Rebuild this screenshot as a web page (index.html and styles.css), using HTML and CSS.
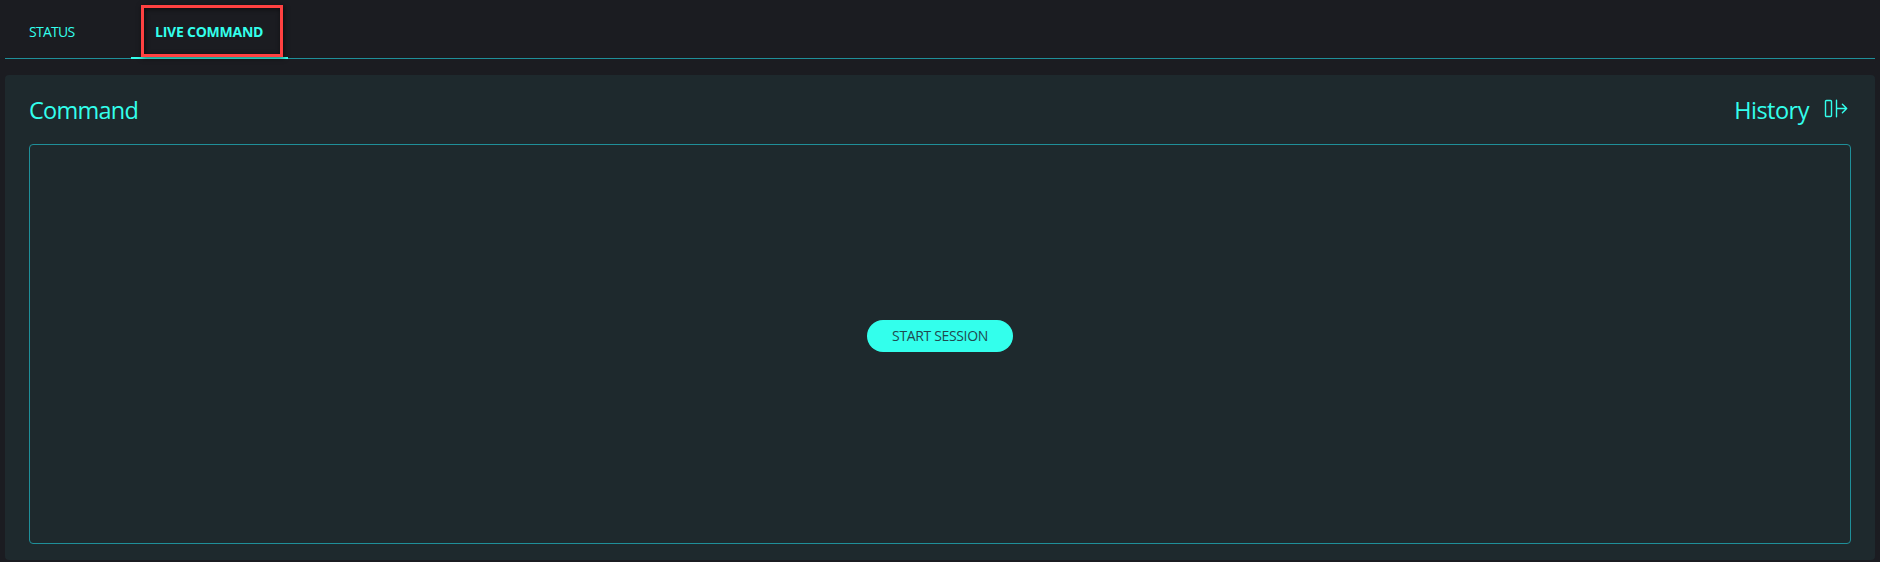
FILE: index.html
```
<!DOCTYPE html>
<html lang="en">
<head>
<meta charset="utf-8">
<title>Live Command</title>
<link rel="stylesheet" href="styles.css">
</head>
<body>
<nav class="tabs">
  <a class="tab tab-status"><span>STATUS</span></a>
  <a class="tab tab-active"><span>LIVE COMMAND</span><i class="highlight"></i></a>
</nav>
<main class="panel">
  <header class="panel-header">
    <h2 class="title title-command">Command</h2>
    <div class="history">
      <h2 class="title title-history">History</h2>
      <svg class="history-icon" width="24" height="20" viewBox="0 0 24 20" fill="none" stroke="currentColor" stroke-width="1.4" stroke-linecap="round" stroke-linejoin="round">
        <rect x="1.5" y="1.5" width="6" height="16" rx="1"/>
        <path d="M12.5 1.2V17.8M12.5 9.5H22.7M18.4 5.2L22.7 9.5L18.4 13.8"/>
      </svg>
    </div>
  </header>
  <section class="terminal">
    <button class="start">START SESSION</button>
  </section>
</main>
</body>
</html>
```
FILE: styles.css
```
* { box-sizing: border-box; }
body {
  margin: 0;
  height: 562px;
  padding: 0 5px;
  overflow: hidden;
  background: #1b1c21;
  color: #33ffec;
  font-family: "Segoe UI", "Open Sans", "Noto Sans", sans-serif;
}
.tabs {
  display: flex;
  gap: 50px;
  height: 59px;
  border-bottom: 1px solid #1f8f99;
}
.tab {
  position: relative;
  height: 59px;
  padding: 22px 24px 0;
  font-size: 14px;
  line-height: 20px;
  white-space: nowrap;
}
.tab-status { width: 76px; letter-spacing: -0.75px; }
.tab-active {
  width: 157px;
  font-weight: 700;
  letter-spacing: -0.23px;
  border-bottom: 2px solid #33ffec;
}
.highlight {
  position: absolute;
  left: 10px;
  top: 5px;
  width: 142px;
  height: 52px;
  border: 3px solid #ff4141;
  box-shadow: 1px 1px 5px rgba(0, 0, 0, 0.6), inset 1px 1px 5px rgba(0, 0, 0, 0.6);
}
.panel {
  display: flex;
  flex-direction: column;
  height: 485px;
  margin-top: 16px;
  padding: 0 24px 16px;
  border-radius: 4px;
  background: #1e292d;
}
.panel-header {
  display: flex;
  justify-content: space-between;
  height: 69px;
  padding-top: 19px;
}
.title {
  margin: 0;
  font-size: 24px;
  font-weight: 400;
  line-height: 32px;
}
.title-command { font-size: 23.5px; letter-spacing: -0.75px; }
.title-history { font-size: 23.5px; letter-spacing: -0.5px; }
.history { display: flex; gap: 15px; padding-right: 3px; }
.history-icon { margin-top: 5px; }
.terminal {
  flex: 1;
  display: flex;
  align-items: center;
  justify-content: center;
  padding-bottom: 16px;
  border: 1px solid #1f8f99;
  border-radius: 4px;
}
.start {
  width: 146px;
  height: 32px;
  padding: 0;
  border: 0;
  border-radius: 16px;
  background: #33ffec;
  color: #1f4a50;
  font: 14px/32px "Segoe UI", "Open Sans", "Noto Sans", sans-serif;
  letter-spacing: -0.35px;
}
```
